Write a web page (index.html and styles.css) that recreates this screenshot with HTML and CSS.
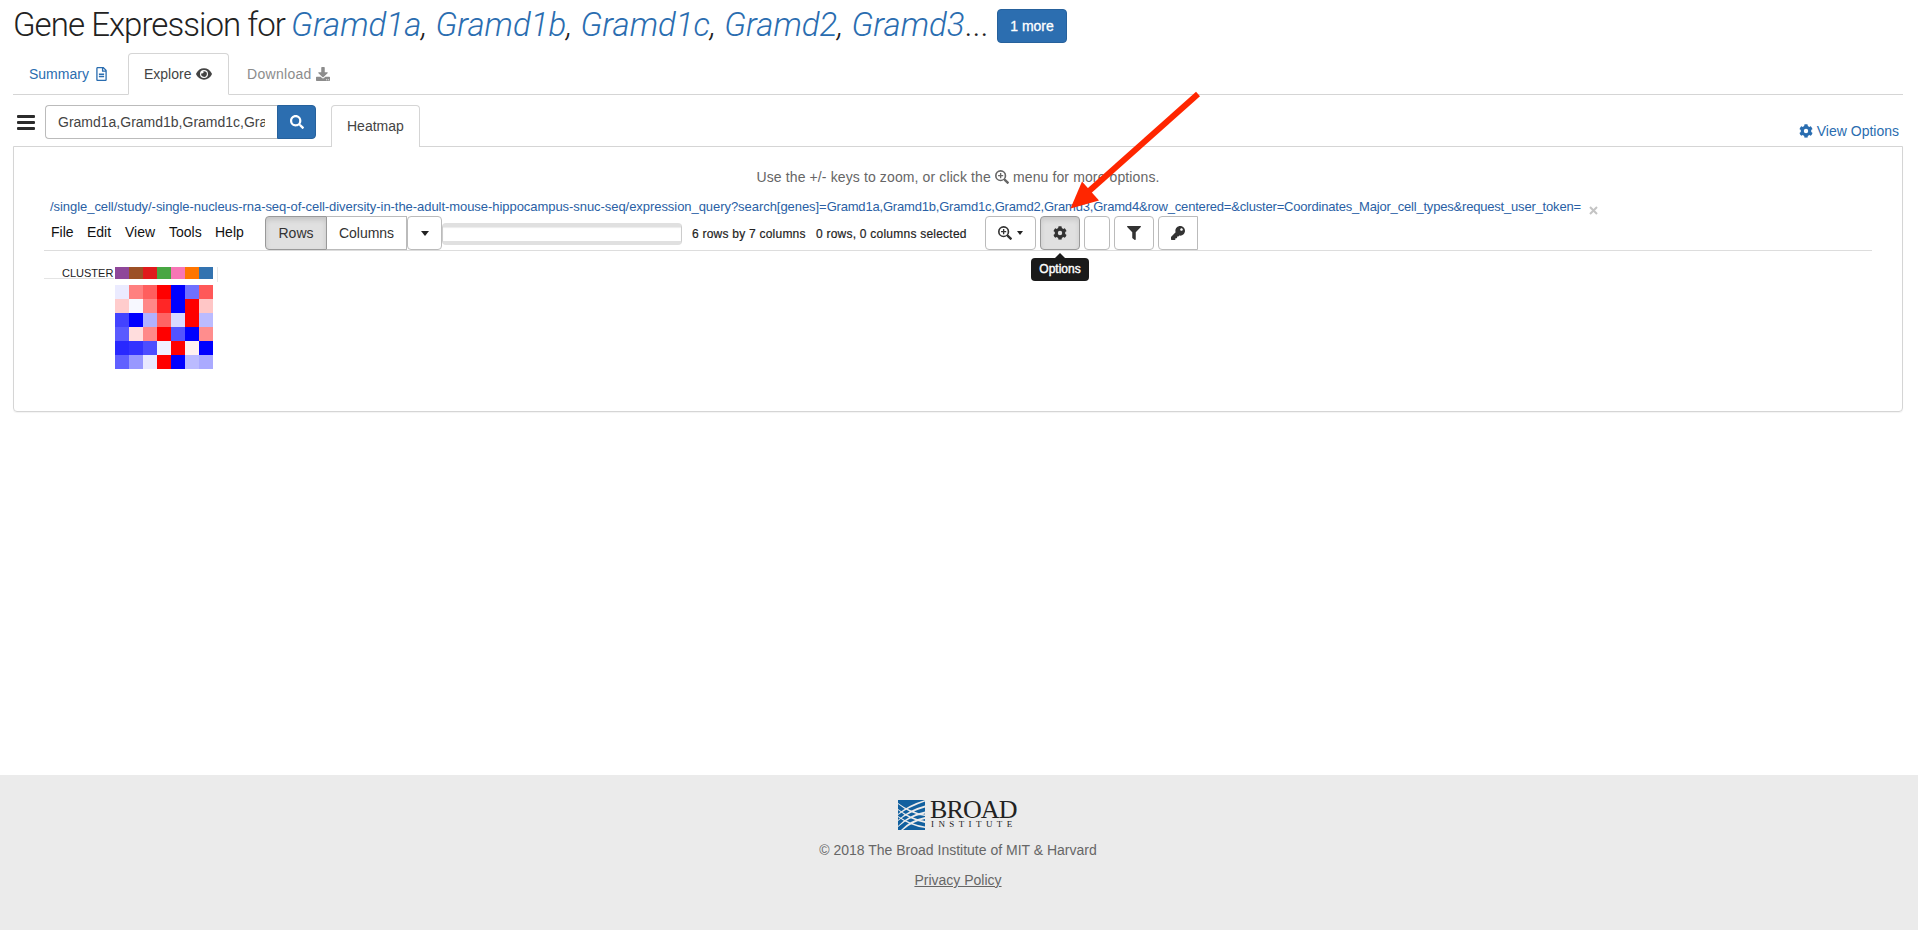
FILE: index.html
```html
<!DOCTYPE html>
<html lang="en">
<head>
<meta charset="utf-8">
<title>Gene Expression</title>
<link rel="stylesheet" href="styles.css">
</head>
<body>
<svg class="defs" width="0" height="0" aria-hidden="true">
  <symbol id="i-file" viewBox="0 0 384 512"><path fill-rule="evenodd" d="M288 248v28c0 6.600-5.400 12-12 12H108c-6.600 0-12-5.400-12-12v-28c0-6.600 5.400-12 12-12h168c6.600 0 12 5.400 12 12zm-12 72H108c-6.600 0-12 5.400-12 12v28c0 6.600 5.400 12 12 12h168c6.600 0 12-5.400 12-12v-28c0-6.600-5.400-12-12-12zm108-188.100V464c0 26.500-21.500 48-48 48H48c-26.500 0-48-21.500-48-48V48C0 21.500 21.500 0 48 0h204.100C264.800 0 277 5.100 286 14.100L369.900 98c9 8.900 14.100 21.200 14.100 33.900zm-128-80V128h76.100L256 51.900zM336 464V176H232c-13.300 0-24-10.700-24-24V48H48v416h288z"/></symbol>
  <symbol id="i-eye" viewBox="0 0 576 512"><path fill-rule="evenodd" d="M569.400 231.600C513.700 122.600 407.300 50 288 50S62.300 122.600 6.600 231.600a51.600 51.600 0 0 0 0 48.800C62.300 389.400 168.700 462 288 462s225.700-72.600 281.400-181.600a51.600 51.600 0 0 0 0-48.800zM288 402a146 146 0 1 1 0-292 146 146 0 0 1 0 292zm0-250c-10 0-20 2-29 5a49 49 0 0 1-69 69 104 104 0 1 0 98-74z"/></symbol>
  <symbol id="i-download" viewBox="0 0 512 512"><path fill-rule="evenodd" d="M216 0h80c13.300 0 24 10.700 24 24v168h87.700c17.800 0 26.700 21.500 14.100 34.100L269.700 378.300c-7.500 7.500-19.800 7.500-27.300 0L90.100 226.100c-12.600-12.600-3.700-34.100 14.100-34.100H192V24c0-13.300 10.700-24 24-24zm296 376v112c0 13.300-10.700 24-24 24H24c-13.300 0-24-10.700-24-24V376c0-13.300 10.700-24 24-24h146.700l49 49c20.100 20.100 52.500 20.100 72.600 0l49-49H488c13.300 0 24 10.700 24 24zM388 444a20 20 0 1 0 0 40 20 20 0 0 0 0-40zm64 0a20 20 0 1 0 0 40 20 20 0 0 0 0-40z"/></symbol>
  <symbol id="i-search" viewBox="0 0 512 512"><path fill-rule="evenodd" d="M505 442.700L405.300 343c-4.500-4.500-10.600-7-17-7H372c27.600-35.300 44-79.700 44-128C416 93.100 322.900 0 208 0S0 93.100 0 208s93.100 208 208 208c48.300 0 92.700-16.400 128-44v16.300c0 6.400 2.500 12.500 7 17l99.700 99.700c9.400 9.400 24.600 9.400 33.900 0l28.300-28.300c9.400-9.400 9.400-24.600.1-34zM208 336a128 128 0 1 1 0-256 128 128 0 0 1 0 256z"/></symbol>
  <symbol id="i-zoom" viewBox="0 0 512 512"><path fill-rule="evenodd" d="M505 442.700L390 328h-20c28-35 42-75 42-122a206 206 0 1 0-206 206c47 0 87-14 122-42v20l115 115c9.400 9.400 24.600 9.400 33.900 0l28.100-28.300c9.400-9.400 9.400-24.600 0-34zM206 352a146 146 0 1 1 0-292 146 146 0 0 1 0 292zM182 112h48v70h70v48h-70v70h-48v-70h-70v-48h70z"/></symbol>
  <symbol id="i-cog" viewBox="0 0 512 512"><path fill-rule="evenodd" d="M487.400 315.700l-42.600-24.600c4.300-23.200 4.300-47 0-70.200l42.600-24.600c4.900-2.800 7.100-8.600 5.500-14-11.100-35.600-30-67.800-54.700-94.600-3.800-4.100-10-5.100-14.800-2.300L380.800 110c-17.900-15.400-38.500-27.300-60.800-35.100V25.800c0-5.600-3.900-10.500-9.400-11.700-36.700-8.200-74.300-7.800-109.200 0-5.500 1.200-9.400 6.100-9.400 11.700V75c-22.200 7.900-42.800 19.800-60.800 35.100L88.700 85.500c-4.900-2.800-11-1.900-14.800 2.300-24.700 26.700-43.600 58.900-54.700 94.600-1.700 5.400.6 11.200 5.500 14L67.300 221c-4.300 23.200-4.300 47 0 70.200l-42.600 24.600c-4.900 2.800-7.100 8.600-5.500 14 11.100 35.600 30 67.800 54.700 94.600 3.800 4.100 10 5.100 14.800 2.300l42.600-24.600c17.900 15.400 38.500 27.300 60.800 35.100v49.200c0 5.600 3.900 10.500 9.400 11.700 36.700 8.200 74.300 7.800 109.200 0 5.500-1.200 9.400-6.100 9.400-11.700v-49.200c22.200-7.900 42.800-19.800 60.800-35.100l42.600 24.600c4.900 2.800 11 1.900 14.800-2.300 24.700-26.700 43.600-58.900 54.700-94.600 1.500-5.500-.7-11.300-5.600-14.100zM256 336a80 80 0 1 1 0-160 80 80 0 0 1 0 160z"/></symbol>
  <symbol id="i-filter" viewBox="0 0 512 512"><path d="M488 0H24C2.700 0-8 25.900 7.100 41L192 225.900V432c0 7.800 3.800 15.200 10.200 19.700l80 56C298 518.700 320 507.500 320 488V225.900L505 41C520 25.900 509.300 0 488 0z"/></symbol>
  <symbol id="i-key" viewBox="0 0 512 512"><path fill-rule="evenodd" d="M512 176C512 273.200 433.200 352 336 352c-11.200 0-22.200-1.100-32.800-3.100l-24 27A24 24 0 0 1 261.200 384H224v40c0 13.300-10.700 24-24 24h-40v40c0 13.300-10.700 24-24 24H24c-13.300 0-24-10.700-24-24v-78.100c0-6.400 2.500-12.500 7-17l161.800-161.800C163.100 213.800 160 195.300 160 176 160 78.800 238.800 0 336 0s176 78.500 176 176zM336 128c0 26.500 21.500 48 48 48s48-21.500 48-48-21.500-48-48-48-48 21.500-48 48z"/></symbol>
</svg>

<main class="page">
  <h1 class="title"><span class="title-lead">Gene Expression for</span><span class="genes"><a>Gramd1a</a>, <a>Gramd1b</a>, <a>Gramd1c</a>, <a>Gramd2</a>, <a>Gramd3</a></span><span class="dots">...</span><button class="more">1 more</button></h1>

  <nav class="tabs">
    <a class="tab tab-link">Summary <svg class="ic ic-file"><use href="#i-file"/></svg></a>
    <a class="tab tab-active">Explore <svg class="ic ic-eye"><use href="#i-eye"/></svg></a>
    <a class="tab tab-muted">Download <svg class="ic"><use href="#i-download"/></svg></a>
  </nav>

  <div class="subbar">
    <div class="burger"><i></i><i></i><i></i></div>
    <div class="search">
      <div class="search-input"><span>Gramd1a,Gramd1b,Gramd1c,Gra</span></div>
      <button class="search-btn"><svg class="ic"><use href="#i-search"/></svg></button>
    </div>
    <a class="subtab">Heatmap</a>
    <a class="view-options"><svg class="ic"><use href="#i-cog"/></svg><span>View Options</span></a>
  </div>

  <section class="panel">
    <p class="hint"><span>Use the +/- keys to zoom, or click the</span><svg class="ic"><use href="#i-zoom"/></svg><span>menu for more options.</span></p>
    <div class="dataset"><a><span class="url-path">/single_cell/study/-single-nucleus-rna-seq-of-cell-diversity-in-the-adult-mouse-hippocampus-snuc-seq/expression_query?search[genes]=</span><span class="url-query">Gramd1a,Gramd1b,Gramd1c,Gramd2,Gramd3,Gramd4&amp;row_centered=&amp;cluster=Coordinates_Major_cell_types&amp;request_user_token=</span></a><svg class="close" viewBox="0 0 9 9"><path d="M1 1l7 7M8 1l-7 7"/></svg></div>
    <div class="toolbar">
      <div class="menus"><span class="m-file">File</span><span class="m-edit">Edit</span><span class="m-view">View</span><span class="m-tools">Tools</span><span>Help</span></div>
      <button class="btn btn-rows">Rows</button><button class="btn btn-cols">Columns</button><button class="btn btn-caret"><i class="caret"></i></button>
      <div class="field"></div>
      <div class="status"><span class="s-dim">6 rows by 7 columns</span><span class="s-sel">0 rows, 0 columns selected</span></div>
      <div class="tools">
        <button class="btn w-zoom"><svg class="ic"><use href="#i-zoom"/></svg><i class="caret caret-sm"></i></button>
        <button class="btn w-tool btn-on"><svg class="ic"><use href="#i-cog"/></svg><span class="tip">Options</span></button>
        <button class="btn w-blank"></button>
        <button class="btn w-tool"><svg class="ic"><use href="#i-filter"/></svg></button>
        <button class="btn w-tool btn-key"><svg class="ic"><use href="#i-key"/></svg></button>
      </div>
    </div>
    <div class="cluster"><div class="cluster-label"><span>CLUSTER</span></div>
      <svg class="swatches" width="98" height="12" shape-rendering="crispEdges"><path fill="#8f4799" d="M0 0h14v12H0z"/><path fill="#9c5026" d="M14 0h14v12H14z"/><path fill="#e01a1c" d="M28 0h14v12H28z"/><path fill="#48a642" d="M42 0h14v12H42z"/><path fill="#f776b5" d="M56 0h14v12H56z"/><path fill="#ff7500" d="M70 0h14v12H70z"/><path fill="#3373b0" d="M84 0h14v12H84z"/></svg>
      <i class="tick"></i>
    </div>
    <div class="heatmap">
      <i class="c1"></i><i class="c2"></i><i class="c3"></i><i class="r"></i><i class="b"></i><i class="c4"></i><i class="c5"></i>
      <i class="c6"></i><i class="c7"></i><i class="c8"></i><i class="c9"></i><i class="b"></i><i class="r"></i><i class="c10"></i>
      <i class="c11"></i><i class="b"></i><i class="c12"></i><i class="c13"></i><i class="c14"></i><i class="r"></i><i class="c15"></i>
      <i class="c16"></i><i class="c17"></i><i class="c8"></i><i class="r"></i><i class="c18"></i><i class="b"></i><i class="c19"></i>
      <i class="c20"></i><i class="c21"></i><i class="c22"></i><i class="c23"></i><i class="r"></i><i class="c24"></i><i class="b"></i>
      <i class="c25"></i><i class="c26"></i><i class="c27"></i><i class="r"></i><i class="b"></i><i class="c15"></i><i class="c28"></i>
    </div>
  </section>
</main>

<svg class="arrow" width="140" height="130" viewBox="1065 88 140 130"><path d="M1198 94L1088 192" stroke="#ff2600" stroke-width="6"/><path d="M1070.500 208.500L1082 181.500L1099 200.500z" fill="#ff2600"/></svg>

<footer class="footer">
  <div class="logo">
    <svg width="27" height="30" viewBox="0 0 27 30"><path fill="#11609f" d="M0 0h27v30H0z"/><path fill="#ebebeb" d="M0 14Q10 5 27 0V1.500Q11 7 0 15zM0 20Q10 10 27 5.500V7.500Q11 12 0 21zM0 26Q10 15 27 11.500V13.500Q11 17 0 27zM3 30Q12 20 27 17V19Q14 22 5 30zM0 3Q12 12 27 14.500V16Q12 14 0 4zM0 9Q12 18 27 21V23Q12 20 0 10zM0 16Q12 24 27 26.500V28Q12 26 0 17z"/></svg>
    <div class="logo-text"><span class="broad">BROAD</span><span class="inst">INSTITUTE</span></div>
  </div>
  <p class="copy">© 2018 The Broad Institute of MIT &amp; Harvard</p>
  <a class="privacy">Privacy Policy</a>
</footer>
</body>
</html>
```
FILE: styles.css
```css
* { box-sizing: border-box; }
body { margin: 0; height: 930px; display: flex; flex-direction: column; overflow: hidden; background: #fff; color: #333; font: 14px/20px "Liberation Sans", Arial, sans-serif; }
.defs { position: absolute; }
i { display: block; }
button { font: inherit; padding: 0; margin: 0; }
.page { padding: 0 15px 0 13px; flex: 1; }
.ic { width: 14px; height: 14px; fill: currentColor; flex: none; }

.title { margin: 0; height: 53px; display: flex; align-items: flex-start; font: 300 33px/49px Roboto, "Liberation Sans", sans-serif; color: #222; white-space: pre; }
.title-lead { width: 278px; letter-spacing: -0.950px; }
.genes { font-style: italic; }
.genes a { color: #2a6db0; }
.dots { flex: none; }
.more { width: 70px; height: 34px; margin: 9px 836px 0 auto; flex: none; background: #2c6eb0; border: 1px solid #26619c; border-radius: 4px; color: #fff; font: 14px/20px "Liberation Sans", Arial, sans-serif; -webkit-text-stroke: .3px; }

.tabs { display: flex; height: 42px; border-bottom: 1px solid #d5d5d5; }
.tab { display: flex; align-items: center; height: 42px; padding: 0 15px 1px; gap: 6px; border: 1px solid transparent; white-space: nowrap; }
.tab-link { color: #2a6db0; width: 115px; gap: 7px; }
.tab-active { color: #444; width: 101px; gap: 5px; border-color: #d5d5d5; border-bottom-color: #fff; border-radius: 4px 4px 0 0; background: #fff; }
.tab-muted { color: #8c8c8c; margin-left: 2px; gap: 4px; letter-spacing: .3px; }
.ic-file { width: 11px; }
.ic-eye { width: 16px; }

.subbar { display: flex; height: 52px; padding-top: 10px; align-items: flex-start; }
.burger { width: 18px; margin: 10px 10px 0 4px; display: grid; gap: 3px; }
.burger i { height: 3px; background: #2b2b2b; border-radius: 1px; }
.search { display: flex; width: 271px; height: 34px; }
.search-input { flex: 1; min-width: 0; border: 1px solid #bbb; border-right: 0; border-radius: 4px 0 0 4px; padding: 6px 12px 6px 12px; color: #444; }
.search-input span { display: block; overflow: hidden; white-space: nowrap; }
.search-btn { width: 39px; flex: none; border: 1px solid #26619c; border-radius: 0 4px 4px 0; background: #2c6eb0; color: #fff; display: flex; align-items: center; justify-content: center; }
.subtab { margin-left: 15px; width: 89px; height: 42px; padding: 10px 0 0 15px; border: 1px solid #d5d5d5; border-bottom: 0; border-radius: 4px 4px 0 0; background: #fff; color: #444; position: relative; }
.view-options { margin: 16px 4px 0 auto; display: flex; align-items: center; gap: 4px; color: #2a6db0; }

.panel { height: 266px; margin-top: -1px; border: 1px solid #d5d5d5; border-radius: 0 0 4px 4px; box-shadow: 0 1px 1px rgba(0,0,0,.05); padding: 20px 30px 0 30px; }
.hint { margin: 0; height: 20px; display: flex; align-items: center; justify-content: center; gap: 4px; color: #666; letter-spacing: .12px; }
.dataset { display: flex; align-items: center; margin: 11px 0 0 6px; height: 18px; white-space: nowrap; font-size: 13px; color: #2a5fa5; }
.url-path { letter-spacing: -0.053px; }
.url-query { letter-spacing: -0.193px; }
.close { width: 9px; height: 9px; margin: 6px 0 0 8px; fill: none; stroke: #c4c4c4; stroke-width: 2; }
.toolbar { display: flex; height: 35px; border-bottom: 1px solid #ddd; }
.menus { display: flex; width: 221px; padding: 6px 0 0 7px; color: #111; }
.m-file { width: 36px; } .m-edit { width: 38px; } .m-view { width: 44px; } .m-tools { width: 46px; }
.btn { height: 34px; border: 1px solid #bbb; border-radius: 4px; background: #fff; color: #333; display: flex; align-items: center; justify-content: center; }
.btn-rows { width: 62px; border-color: #999; border-radius: 4px 0 0 4px; background: #e0e0e0; box-shadow: inset 0 3px 5px rgba(0,0,0,.12); }
.btn-cols { width: 80px; border-left: 0; border-radius: 0; }
.btn-caret { width: 35px; }
.caret { border: 4px solid transparent; border-top: 5px solid #222; border-bottom: 0; }
.caret-sm { margin-left: 5px; border-width: 4px 3px 0; }
.field { width: 240px; height: 22px; margin-top: 7px; border: 1px solid #ccc; border-width: 4px 1px; border-color: #e0e0e0 #ccc; border-radius: 4px; box-shadow: inset 0 1px 1px rgba(0,0,0,.08); }
.status { display: flex; width: 303px; padding: 8px 0 0 10px; font-size: 12px; letter-spacing: .23px; color: #222; -webkit-text-stroke: .2px; white-space: nowrap; }
.s-dim { width: 124px; }
.tools { display: flex; gap: 4px; }
.w-zoom { width: 51px; } .w-tool { width: 40px; } .w-blank { width: 26px; }
.btn-on { background: #e0e0e0; border-color: #999; position: relative; box-shadow: inset 0 3px 5px rgba(0,0,0,.1); }
.btn-key { border-radius: 4px 0 0 4px; }
.tip { position: absolute; left: -10px; top: 41px; width: 58px; height: 23px; border-radius: 4px; background: #1a1a1a; color: #fff; font-size: 12px; line-height: 22px; -webkit-text-stroke: .4px; }
.tip::before { content: ""; position: absolute; left: 24px; top: -5px; border: 5px solid transparent; border-top: 0; border-bottom-color: #1a1a1a; }
.cluster { display: flex; margin-top: 16px; height: 18px; }
.cluster-label { width: 71px; height: 12px; padding-left: 18px; font-size: 11px; line-height: 13px; color: #222; background: linear-gradient(#e4e4e4, #e4e4e4) 0 11px / 70px 1px no-repeat; }
.tick { width: 1px; height: 15px; margin-left: 4px; background: #e8e8e8; }
.heatmap { display: grid; grid-template-columns: repeat(7, 14px); grid-auto-rows: 14px; margin-left: 71px; }
.r { background: #f00; } .b { background: #0000ff; }
.c1 { background: #ebebff; } .c2 { background: #ff8080; } .c3 { background: #ff5e5e; } .c4 { background: #7070ff; } .c5 { background: #ff5858; }
.c6 { background: #ffcccc; } .c7 { background: #f7f8ff; } .c8 { background: #ff8888; } .c9 { background: #ff2626; } .c10 { background: #ffc6c6; }
.c11 { background: #4343ff; } .c12 { background: #b1b1ff; } .c13 { background: #ff6464; } .c14 { background: #d8d8ff; } .c15 { background: #bbbbff; }
.c16 { background: #5a5aff; } .c17 { background: #ffdddd; } .c18 { background: #5353ff; } .c19 { background: #ff8d8d; }
.c20 { background: #2828ff; } .c21 { background: #3333ff; } .c22 { background: #4d4dff; } .c23 { background: #f0f0ff; } .c24 { background: #fff1f1; }
.c25 { background: #6060ff; } .c26 { background: #9898ff; } .c27 { background: #e8e8ff; } .c28 { background: #aaaaff; }

.arrow { position: absolute; left: 1065px; top: 88px; }

.footer { height: 155px; background: #ebebeb; display: flex; flex-direction: column; align-items: center; color: #666; padding: 25px 2px 0 0; }
.logo { display: flex; gap: 5px; height: 30px; }
.logo-text { display: flex; flex-direction: column; font-family: "Liberation Serif", serif; color: #222; width: 88px; white-space: nowrap; }
.broad { font-size: 26px; line-height: 19px; height: 22px; letter-spacing: -0.900px; }
.inst { font-size: 9px; line-height: 11px; letter-spacing: 4.400px; padding-left: 1px; }
.copy { margin: 10px 0; }
.privacy { text-decoration: underline; }
```
